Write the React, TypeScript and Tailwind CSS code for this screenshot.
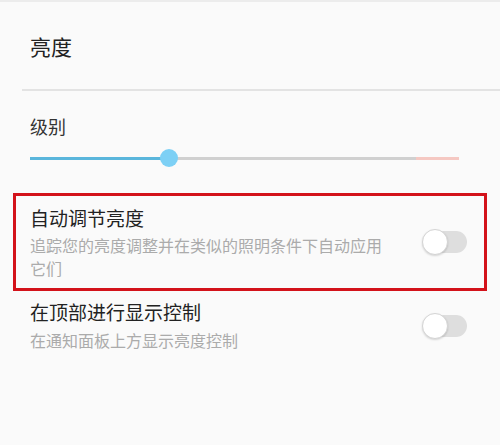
import React from "react";

const font = { fontFamily: '"Noto Sans CJK SC", "Noto Sans", sans-serif' };

function Toggle() {
  return (
    <div className="relative w-[45px] h-[28px] shrink-0">
      <div className="absolute left-[6px] right-0 top-[3px] h-[22px] rounded-full bg-[#dedede]" />
      <div className="absolute left-0 top-[1px] w-[26px] h-[26px] rounded-full bg-white border border-[#d4d4d4] shadow-[0_1px_2px_rgba(0,0,0,0.15)]" />
    </div>
  );
}

export default function App() {
  return (
    <div
      className="w-[500px] h-[445px] bg-[#fafafa] border-t-2 border-[#ececec] overflow-hidden flex flex-col"
      style={font}
    >
      <div className="pl-[30px] pt-[30px] text-[21px] leading-[28px] text-[#222]">亮度</div>
      <div className="ml-[22px] mt-[29px] h-[2px] bg-[#e3e3e3]" />
      <div className="pl-[30px] mt-[23px] text-[18px] leading-[24px] text-[#333]">级别</div>
      <div className="ml-[30px] mt-[11px] w-[429px] h-[18px] relative flex items-center">
        <div className="h-[3px] w-[139px] bg-[#5ab6dc]" />
        <div className="h-[3px] w-[247px] bg-[#d0d0d0]" />
        <div className="h-[3px] flex-1 bg-[#f5c8c2]" />
        <div className="absolute left-[130px] top-0 w-[18px] h-[18px] rounded-full bg-[#7dd0f5]" />
      </div>
      <div className="ml-[13px] mt-[26px] w-[474px] h-[98px] border-[3px] border-[#d3121a] flex items-center pl-[14px] pr-[17px]">
        <div className="w-[362px] flex flex-col">
          <div className="text-[19px] leading-[26px] text-[#222]">自动调节亮度</div>
          <div className="mt-[3px] text-[16px] leading-[23px] text-[#ababab]">
            追踪您的亮度调整并在类似的照明条件下自动应用它们
          </div>
        </div>
        <div className="flex-1" />
        <Toggle />
      </div>
      <div className="ml-[30px] mt-[8px] w-[437px] flex items-center">
        <div className="w-[362px] flex flex-col">
          <div className="text-[19px] leading-[26px] text-[#222]">在顶部进行显示控制</div>
          <div className="mt-[4px] text-[16px] leading-[23px] text-[#ababab]">在通知面板上方显示亮度控制</div>
        </div>
        <div className="flex-1" />
        <Toggle />
      </div>
    </div>
  );
}
